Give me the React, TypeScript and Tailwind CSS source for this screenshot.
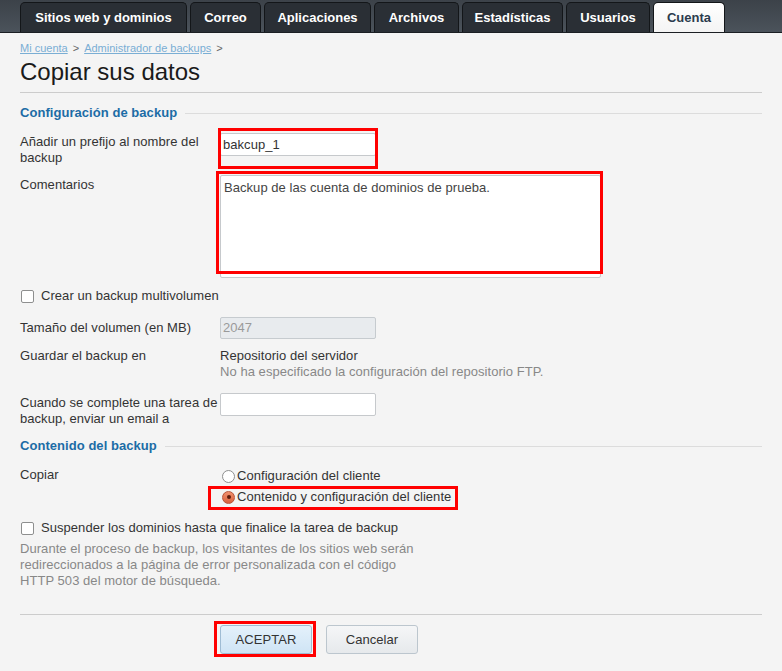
import React from "react";

const tabs = [
  { label: "Sitios web y dominios", w: "w-[167px]" },
  { label: "Correo", w: "w-[71px]" },
  { label: "Aplicaciones", w: "w-[107px]" },
  { label: "Archivos", w: "w-[85px]" },
  { label: "Estadísticas", w: "w-[101px]" },
  { label: "Usuarios", w: "w-[84px]" },
];

function RedBox({ className }: { className: string }) {
  return <span className={"pointer-events-none absolute border-[3px] border-[#ff0000] " + className} />;
}

function SectionTitle({ children, className }: { children: React.ReactNode; className: string }) {
  return (
    <div className={"flex items-center gap-2 " + className}>
      <span className="text-[13px] leading-4 font-bold text-[#1c6ca6]">{children}</span>
      <span className="h-px flex-1 bg-[#dcdcdc]" />
    </div>
  );
}

function Checkbox() {
  return <span className="h-[13px] w-[13px] shrink-0 rounded-[2px] border border-[#8e8f8f] bg-white" />;
}

export default function App() {
  return (
    <div className="min-h-[671px] w-[782px] bg-[#f4f4f4] font-['Liberation_Sans',Arial,sans-serif] text-[13px] tracking-[0.05px] text-[#333]">
      <div className="flex h-[33px] items-end gap-[3px] border-b border-[#1b1f23] bg-gradient-to-b from-[#3c4249] to-[#4b535b] pl-[20px] tracking-normal">
        {tabs.map((t) => (
          <div
            key={t.label}
            className={
              "flex h-[30px] items-center justify-center rounded-t-[5px] border border-b-0 border-[#131619] bg-[#2a2f35] text-[13px] font-bold text-white " +
              t.w
            }
          >
            {t.label}
          </div>
        ))}
        <div className="flex h-[30px] w-[72px] items-center justify-center rounded-t-[5px] border border-b-0 border-[#131619] bg-gradient-to-b from-white to-[#f4f4f4] text-[13px] font-bold text-[#2b3c4e]">
          Cuenta
        </div>
      </div>

      <div className="px-[20px] pt-[8px]">
        <div className="flex h-[14px] items-center gap-[5px] text-[11px] leading-[14px] tracking-normal">
          <span className="text-[#7aaed4] underline">Mi cuenta</span>
          <span className="text-[#666]">&gt;</span>
          <span className="text-[#7aaed4] underline">Administrador de backups</span>
          <span className="text-[#666]">&gt;</span>
        </div>
        <h1 className="mt-[3px] border-b border-[#cccccc] pb-[6px] text-[24px] leading-[28px] tracking-normal text-[#1a1a1a]">Copiar sus datos</h1>

        <SectionTitle className="mt-[12px]">Configuración de backup</SectionTitle>

        <div className="mt-[12px] flex">
          <div className="mt-px w-[200px] pr-[4px] leading-4">Añadir un prefijo al nombre del backup</div>
          <div className="relative">
            <input
              readOnly
              value="bakcup_1"
              className="h-[23px] w-[156px] rounded-[2px] border border-[#c6c9cc] bg-white px-[2px] text-[13px] text-[#333] outline-none"
            />
            <RedBox className="-left-[2px] -right-[2px] -top-[5px] -bottom-[3px]" />
          </div>
        </div>

        <div className="mt-[9px] flex">
          <div className="w-[200px] pt-[2px] leading-4">Comentarios</div>
          <div className="relative">
            <div className="h-[103px] w-[381px] rounded-[2px] border border-[#c6c9cc] bg-white px-[3px] pt-[4px] leading-4 text-[#444]">
              Backup de las cuenta de dominios de prueba.
            </div>
            <RedBox className="-left-[4px] -right-[2px] -top-[4px] bottom-[4px]" />
          </div>
        </div>

        <div className="mt-[10px] flex items-center gap-[7px] pl-px leading-4">
          <Checkbox />
          <span>Crear un backup multivolumen</span>
        </div>

        <div className="mt-[13px] flex">
          <div className="w-[200px] pt-[3px] leading-4">Tamaño del volumen (en MB)</div>
          <div className="flex h-[22px] w-[156px] items-center rounded-[2px] border border-[#c6cbcf] bg-[#e8ebee] px-[2px] text-[#9a9a9a]">
            2047
          </div>
        </div>

        <div className="mt-[9px] flex leading-4">
          <div className="w-[200px]">Guardar el backup en</div>
          <div>
            <div>Repositorio del servidor</div>
            <div className="text-[#888]">No ha especificado la configuración del repositorio FTP.</div>
          </div>
        </div>

        <div className="mt-[13px] flex">
          <div className="w-[200px] pt-[2px] leading-4">Cuando se complete una tarea de backup, enviar un email a</div>
          <div className="h-[23px] w-[156px] rounded-[2px] border border-[#c6c9cc] bg-white" />
        </div>

        <SectionTitle className="mt-[11px]">Contenido del backup</SectionTitle>

        <div className="mt-[13px] flex leading-4">
          <div className="w-[200px]">Copiar</div>
          <div className="flex flex-col gap-[5px] pl-[2px] pt-px">
            <div className="flex items-center gap-[2px]">
              <span className="h-[13px] w-[13px] rounded-full border border-[#8e8f8f] bg-white" />
              <span>Configuración del cliente</span>
            </div>
            <div className="relative flex items-center gap-[2px]">
              <span className="flex h-[13px] w-[13px] items-center justify-center rounded-full border border-[#b8543a] bg-gradient-to-b from-[#f0906e] to-[#d9603c]">
                <span className="h-[4px] w-[4px] rounded-full bg-[#5a1c0c]" />
              </span>
              <span>Contenido y configuración del cliente</span>
              <RedBox className="-left-[14px] -right-[7px] -top-[3px] -bottom-[5px]" />
            </div>
          </div>
        </div>

        <div className="mt-[15px] flex items-center gap-[7px] pl-px leading-4">
          <Checkbox />
          <span>Suspender los dominios hasta que finalice la tarea de backup</span>
        </div>
        <div className="mt-[5px] w-[400px] leading-4 text-[#888]">
          Durante el proceso de backup, los visitantes de los sitios web serán redireccionados a la página de error personalizada con el código HTTP 503 del motor de búsqueda.
        </div>

        <div className="mt-[25px] h-px bg-[#cccccc]" />

        <div className="mt-[10px] flex gap-[14px] pl-[200px]">
          <div className="relative">
            <div className="flex h-[29px] w-[92px] items-center justify-center rounded-[3px] border border-[#9fbcd4] bg-gradient-to-b from-[#e4f1fb] to-[#cfe4f5] text-[#333]">
              ACEPTAR
            </div>
            <RedBox className="-left-[6px] -right-[4px] -top-[4px] -bottom-[3px]" />
          </div>
          <div className="flex h-[29px] w-[92px] items-center justify-center rounded-[3px] border border-[#bcc6ce] bg-gradient-to-b from-[#f5f6f7] to-[#e6e9ec] text-[#333]">
            Cancelar
          </div>
        </div>
      </div>
    </div>
  );
}
